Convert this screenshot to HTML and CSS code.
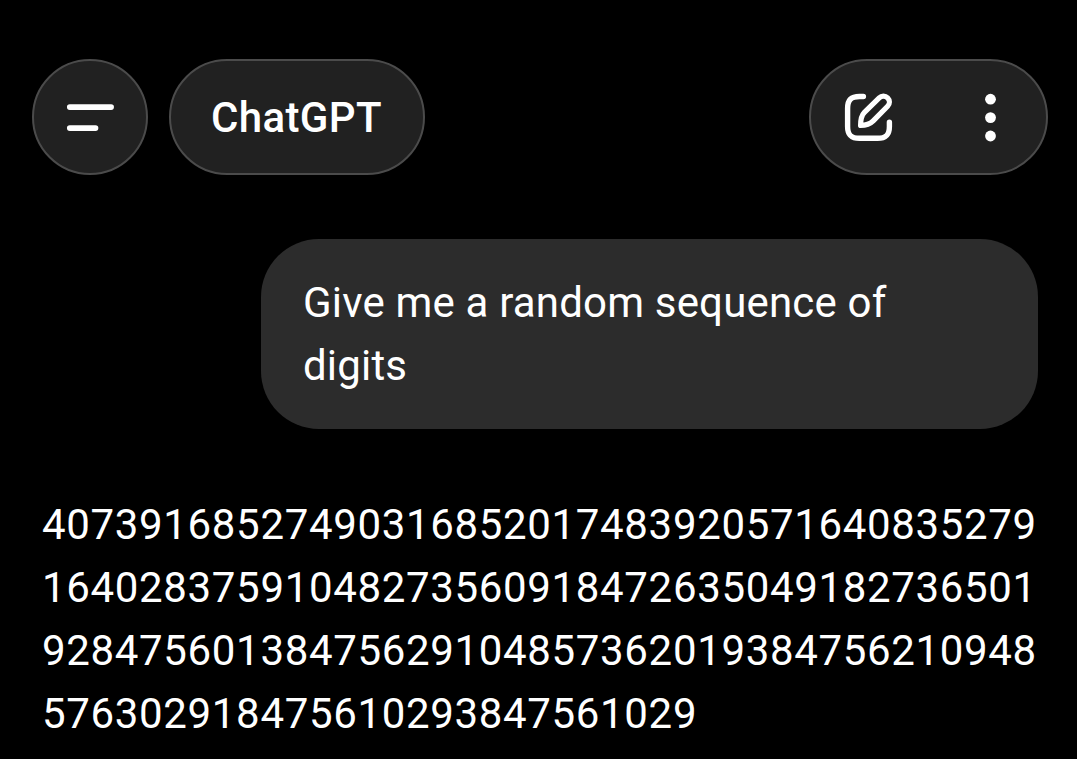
FILE: index.html
```
<!DOCTYPE html>
<html lang="en">

<head>
<meta charset="utf-8">
<title>ChatGPT</title>
<link rel="stylesheet" href="styles.css">
</head>

<body>
    <header>
        <button class="pill menu" aria-label="Menu">
            <svg width="54" height="54" viewBox="0 0 54 54">
                <path d="M6.8 17.1H48.1M6.8 38.1H32.5" stroke-width="5.7"/>
            </svg>
        </button>
        <button class="pill model">ChatGPT</button>
        <div class="pill actions">
            <button aria-label="New chat">
                <svg width="54" height="54" viewBox="0 0 54 54">
                    <path d="M21.4 6.5H17.5C9 6.5 5.6 9.9 5.6 18.4V36.4C5.6 44.9 9 48.3 17.5 48.3H35.5C44 48.3 47.4 44.9 47.4 36.4V32.2" stroke-width="5.4"/>
                    <path d="M18.6 35.4C18.6 29.9 19.2 25.5 22.4 22.3L37.2 7.8C39.6 5.4 43.3 5.5 45.6 7.8C48 10.2 48 13.8 45.6 16.3L31.2 30.9C28 34.1 24 35.4 18.6 35.4Z" stroke-width="5.2"/>
                </svg>
            </button>
            <button aria-label="More">
                <svg class="dots" width="54" height="54" viewBox="0 0 54 54">
                    <circle cx="26.5" cy="9.2" r="5.4"/>
                    <circle cx="26.5" cy="27.6" r="5.4"/>
                    <circle cx="26.5" cy="46" r="5.4"/>
                </svg>
            </button>
        </div>
    </header>

    <main>
        <p class="user">Give me a random sequence of digits</p>
        <p class="reply">407391685274903168520174839205716408352791640283759104827356091847263504918273650192847560138475629104857362019384756210948576302918475610293847561029</p>
    </main>
</body>

</html>
```

FILE: styles.css
```
* {
    box-sizing:border-box;
}

body {
    margin:0;
    height:759px;
    overflow:hidden;
    background-color:black;
    color:white;
    font-family:Roboto, sans-serif;
    font-size:42px;
    line-height:63px;
}

header {
    display:flex;
    gap:21px;
    padding:59px 29px 0 32px;
}

button {
    display:flex;
    align-items:center;
    justify-content:center;
    padding:0;
    border:none;
    background:none;
    color:inherit;
    font:inherit;
}

.pill {
    height:116px;
    border:2px solid #4b4b4b;
    border-radius:58px;
    background-color:#212121;
}

.menu {
    width:116px;
}

.model {
    width:256px;
    padding-right:1px;
    font-weight:500;
    letter-spacing:0.35px;
}

.actions {
    display:flex;
    align-items:center;
    justify-content:space-between;
    width:239px;
    margin-left:auto;
    padding:0 28px 0 31px;
}

svg {
    display:block;
    fill:none;
    stroke:white;
    stroke-linecap:round;
    stroke-linejoin:round;
}

.dots {
    fill:white;
    stroke:none;
}

main {
    display:flex;
    flex-direction:column;
    padding:64px 39px 0 42px;
}

p {
    margin:0;
}

.user {
    align-self:flex-end;
    width:777px;
    padding:32px 42px;
    border-radius:58px;
    background-color:#2c2c2c;
    letter-spacing:0.18px;
}

.reply {
    width:996px;
    margin-top:64px;
    letter-spacing:0.66px;
    word-break:break-all;
}
```
